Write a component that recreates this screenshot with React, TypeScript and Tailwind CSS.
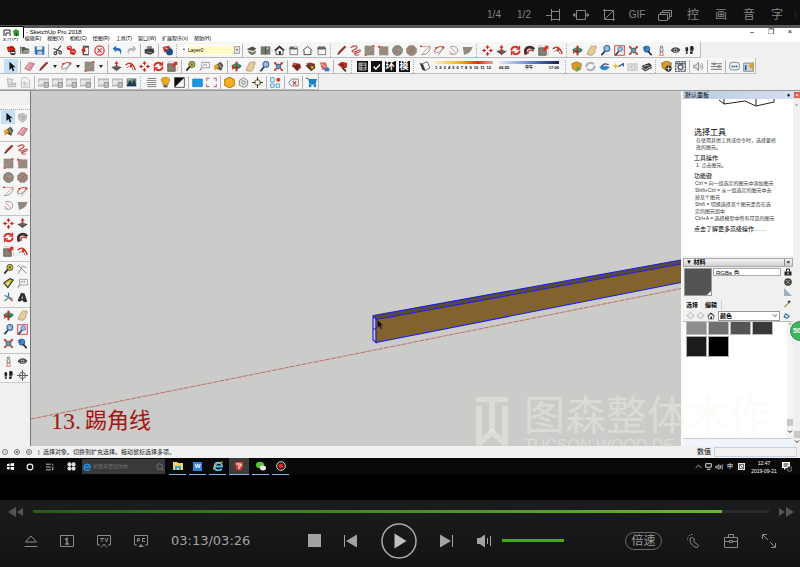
import type { ReactNode } from "react";
import clsx from "clsx";

const arrows = (
  <g stroke="#c8281e" strokeWidth="1.5" fill="#c8281e">
    <path d="M8 2v12M2 8h12" strokeDasharray="4 4" />
    <path d="M8 0l3 4H5zM8 16l3-4H5zM0 8l4-3v6zM16 8l-4-3v6z" stroke="none" />
  </g>
);

const glyphs: Record<string, ReactNode> = {
  newFile: <g><path d="M1 3l9-2 4 5-3 6-8-2z" fill="#d3271d" /><path d="M3 4l6-1 3 3" stroke="#7c1410" fill="none" /><circle cx="10" cy="11" r="4" fill="#333" /><path d="M7 11h6" stroke="#fff" strokeWidth="1.6" /></g>,
  open: <g><path d="M2 3h5l2 2h4v3H6l-3 6z" fill="#4f5b4a" /><path d="M5 8h10l-3 5H2z" fill="#8c9a82" /><path d="M1 2v11" stroke="#333" /></g>,
  save: <g><path d="M1 2h14v12H3l-2-2z" fill="#2f71b5" /><path d="M4 2h8v5H4z" fill="#eee" /><path d="M5 9h7v5H5z" fill="#bcd" /></g>,
  cut: <g stroke="#444" strokeWidth="1.6" fill="none"><path d="M13 1L6 10M2 5l11 4" /><circle cx="5" cy="12" r="2" /><circle cx="12" cy="11" r="2" /></g>,
  copy: <g fill="#d3271d"><path d="M1 2l6-1 2 3-2 4-5-1z" /><path d="M6 7l6-2 3 4-3 6-6-2z" /><path d="M3 3l4 1M8 9l5 1" stroke="#fff" /></g>,
  paste: <g><path d="M4 1h9v14H4z" fill="#555" /><path d="M6 4h6v9H6z" fill="#f5f5f5" /><path d="M2 6l5-2 1 5-4 3z" fill="#d3271d" /></g>,
  erase: <g fill="none" stroke="#e03028" strokeWidth="1.7"><circle cx="8" cy="8" r="6.8" /><path d="M5 5l6 6M11 5l-6 6" /></g>,
  undo: <path d="M1 5l5-4v3c7 0 10 4 6 11 1-5-1-7-6-7v3z" fill="#2470b8" />,
  redo: <path d="M15 5l-5-4v3C3 4 0 8 4 15c-1-5 1-7 6-7v3z" fill="#b9b9b9" />,
  print: <g><path d="M4 2l7-1 1 5H4z" fill="#888" /><path d="M1 6l13-1 1 6-6 3-8-2z" fill="#3b3b3b" /><path d="M4 10l7 1" stroke="#ccc" /></g>,
  model: <g><path d="M1 3l9-2 4 5-3 6-8-2z" fill="#cf3026" /><circle cx="11" cy="10" r="5" fill="#1f4e80" /><path d="M4 4l5 2" stroke="#fff" /></g>,
  iso: <g><path d="M1 6l8-4 6 3-5 4z" fill="#4a4d44" /><path d="M3 8l7 3 4-4v5l-5 3-5-3z" fill="#76796c" /><path d="M7 7l3 2" stroke="#ddd" /></g>,
  top: <g><path d="M1 2h14v12H1z" fill="#76796c" /><path d="M8 2v12" stroke="#3b3d37" /><path d="M10 4h2v2h-2z" fill="#ddd" /></g>,
  home: <g><path d="M1 8l7-6 7 6" fill="none" stroke="#222" strokeWidth="2" /><path d="M3 8v6h10V8L8 4z" fill="#f8f8f8" stroke="#222" /><path d="M7 9h3v5H7z" fill="#222" /></g>,
  right: <g><path d="M3 2h11v4H1z" fill="#66695e" /><path d="M3 6h11v8H3z" fill="#f6f6f6" stroke="#555" /><path d="M9 1h4v3H9z" fill="#ddd" /></g>,
  back: <g fill="#fafafa" stroke="#444" strokeWidth="1.4"><path d="M1 8l7-6 7 6" /><path d="M3 8v6h10V8" /></g>,
  left: <g><path d="M3 2h10l2 4H1z" fill="#66695e" /><path d="M3 6h11v8H3z" fill="#f6f6f6" stroke="#555" /></g>,
  pencil: <g><path d="M2 14l2-4L13 1l2 2-9 9z" fill="#a8291e" /><path d="M4 10l8-8" stroke="#40201c" /><path d="M2 14l1-3 2 2z" fill="#222" /></g>,
  freehand: <path d="M1 4c6-5 12-2 8 1S1 8 4 10s10-5 11-2-11 4-8 6 6 0 6 0" fill="none" stroke="#bc4545" strokeWidth="1.6" />,
  rect: <g><path d="M1 1h14v14H1z" fill="#8f8c80" /><path d="M3 14L14 2" stroke="#e58c84" /><path d="M1 13h3v3H1zM12 0h3v3h-3z" fill="#dc5b50" /></g>,
  rotRect: <g><path d="M2 2h13v13H2z" fill="#8f8c80" /><path d="M2 15V2l5 1 8 11" fill="none" stroke="#e07068" /><path d="M0 1h3v3H0z" fill="#dc4b40" /></g>,
  circle: <g><circle cx="8" cy="8" r="7.2" fill="#8f8c80" stroke="#6d6b60" /><path d="M7 9l5-4" stroke="#e5a09a" /><path d="M6 8h2v2H6z" fill="#d9483c" /></g>,
  polygon: <g><path d="M5 1h6l4 4v6l-4 4H5l-4-4V5z" fill="#8f8c80" stroke="#b4635a" /><path d="M5 12l7-8M5 5l3 3" stroke="#d9483c" /></g>,
  arc: <g fill="none"><path d="M2 14C10 14 14 10 15 2" stroke="#666" /><path d="M1 2h13L2 14" stroke="#dd766e" /><path d="M0 1h3v2H0z" fill="#d33" /></g>,
  arc2: <g fill="none"><path d="M1 11C1 3 8 1 14 3" stroke="#d65a50" strokeWidth="1.5" /><path d="M1 12l7-2 6-6-8 11" stroke="#777" /><path d="M2 3h3v2H2zM12 2h3v3h-3z" fill="#d33" /></g>,
  arc3: <g fill="none"><path d="M3 3c6-3 12 1 11 6s-8 6-12 3" stroke="#777" /><path d="M3 3l9 9M2 9l5 4" stroke="#e07068" /></g>,
  pie: <g><path d="M1 3h14C14 10 9 13 3 14z" fill="#8f8c80" /><path d="M15 2L3 14" stroke="#d66" /></g>,
  move: arrows,
  pushpull: <g><path d="M1 9l7-3 7 3-7 6z" fill="#6b6c60" /><path d="M1 9l7 3 7-3" stroke="#333" fill="none" /><path d="M8 0l3 4H9v6H7V4H5z" fill="#d42a20" /></g>,
  rotate: <g fill="none" stroke="#d42a20" strokeWidth="2.6"><path d="M2 8c0-6 8-7 11-3M14 8c0 6-8 7-11 3" /><path d="M14 1v5H9M2 15v-5h5" strokeWidth="1.6" /></g>,
  follow: <g fill="none"><path d="M3 14C-1 4 8 0 15 6" stroke="#3e302c" strokeWidth="4" /><path d="M6 13c-2-5 3-7 8-4" stroke="#b5281d" strokeWidth="2" /></g>,
  scale: <g><path d="M1 4h11v11H1z" fill="#858273" stroke="#4b4a40" /><path d="M9 1h6v6l-2-2-4 4-2-2 4-4z" fill="#e02b20" /><path d="M1 1h6M15 9v6" stroke="#e49a94" /></g>,
  offset: <g fill="none"><path d="M1 6c5-5 10-4 14 7" stroke="#d42a20" strokeWidth="2" /><path d="M3 10c3-4 7-3 9 4" stroke="#555" /><path d="M8 3l4 4-5 3z" fill="#d42a20" /></g>,
  tape: <g><circle cx="10" cy="5" r="4.5" fill="#c9ba2e" stroke="#333" /><path d="M7 8l-5 6" stroke="#222" strokeWidth="2.4" /><circle cx="10" cy="5" r="1.6" fill="#555" /></g>,
  label: <g fill="#fff" stroke="#777"><path d="M4 2h11v8H4z" /><path d="M6 7l2-3 1 3M11 4v3" /><path d="M4 10l-3 4" stroke="#222" /></g>,
  paint: <g><path d="M5 5l6-4 4 5-3 8-7-3z" fill="#5b5442" /><path d="M1 8c3-5 8-3 7 1l-5 5z" fill="#dda32c" /><path d="M9 4l3 6" stroke="#ddd" /></g>,
  orbit: <g fill="none"><path d="M1 7c2-5 12-5 14 0 0 6-13 6-14 0z" fill="#2f9d70" /><path d="M8 1v14" stroke="#b33" strokeWidth="3" /><path d="M1 7c4 4 9 4 14 0" stroke="#333" /><path d="M1 6l5 3-4 4z" fill="#d42a20" /></g>,
  pan: <path d="M2 14c-1-4 2-5 3-8 1-3 3-5 4-5l1 1 4-1 1 3-2 3c1 4-2 7-5 8z" fill="#e6ca9c" stroke="#a38b62" />,
  zoom: <g><circle cx="10" cy="5" r="4.2" fill="#9bbddf" stroke="#39639b" strokeWidth="1.5" /><path d="M7 9l-5 6" stroke="#26354a" strokeWidth="2.5" /></g>,
  zoomWin: <g><path d="M1 1h14v14H1z" fill="none" stroke="#d44" strokeWidth="1.5" /><circle cx="9" cy="6" r="3.6" fill="#9bbddf" stroke="#39639b" /><path d="M7 9l-5 6" stroke="#26354a" strokeWidth="2" /></g>,
  extents: <g><path d="M1 1l5 2-3 3zM15 1l-5 2 3 3zM1 15l5-2-3-3zM15 15l-5-2 3-3z" fill="#d42a20" /><path d="M2 2l12 12M14 2L2 14" stroke="#a22" /><circle cx="8" cy="8" r="3.5" fill="#6595b5" stroke="#345" /></g>,
  prev: <g><circle cx="7" cy="6" r="4.5" fill="#3d8ad2" stroke="#23507f" /><path d="M9 9l5 6" stroke="#222" strokeWidth="2.4" /><path d="M1 4l5-3v6z" fill="#1e66ac" /></g>,
  person: <g fill="none" stroke="#444"><circle cx="8" cy="3" r="1.6" /><path d="M6 5v5h4V5" /><path d="M7 10l-2 5h6l-2-5" stroke="#d44" /></g>,
  eye: <g><path d="M1 8c3-6 11-6 14-1-3 6-10 6-14 1z" fill="#4b4b4b" /><circle cx="8" cy="8" r="2.8" fill="#aaa" /><circle cx="8" cy="8" r="1.2" fill="#111" /></g>,
  walk: <g fill="#222"><path d="M2 4c3-3 5 0 4 3l-1 6H3zM9 2c4-2 6 1 5 4l-2 7H9z" /><path d="M3 10h3M9 9h4" stroke="#eee" /></g>,
  select: <path d="M5 1v12l3-3 2 5 2-1-2-5h4z" fill="#111" />,
  lasso: <g fill="#c8c8c8" stroke="#999"><path d="M2 4l6-2 6 3-1 6-5 4-5-4z" /><path d="M6 6l5 1-2 4z" /></g>,
  eraser: <g><path d="M1 11l7-9 7 2-6 10z" fill="#e394a3" stroke="#a45566" /><path d="M4 11l6-8" stroke="#fadce1" /></g>,
  gemRed: <g><path d="M1 7l4-4 8 1 2 5-6 6z" fill="#a22c22" /><path d="M4 4l9 3-5 6z" fill="#443430" /><path d="M3 3l4 3" stroke="#e44" strokeWidth="2" /></g>,
  gemOrange: <g><path d="M1 7l5-5 8 2 1 6-6 5z" fill="#56392c" /><path d="M1 4l7-2 2 4z" fill="#d42a20" /><path d="M8 7l5 1-3 5z" fill="#f0a81c" /></g>,
  gemBlue: <g><path d="M1 2h9l3 9-8 2z" fill="#dc6258" /><path d="M8 10h7v5H8z" fill="#2b7bc8" /><path d="M3 4l7 5" stroke="#fff" /></g>,
  ruby: <g><path d="M1 5l6-4 8 2-1 7-6 1z" fill="#c32b22" /><path d="M8 10l5 5" stroke="#333" strokeWidth="2.5" /><path d="M5 4l5 3" stroke="#692020" strokeWidth="2" /></g>,
  list: <g><path d="M0 0h16v16H0z" fill="#111" /><path d="M3 3h10v10H3zM3 6h10M3 10h10M6 3v10" stroke="#fff" fill="none" /></g>,
  check: <g><path d="M0 0h16v16H0z" fill="#111" /><path d="M4 8l3 4 6-7" stroke="#fff" strokeWidth="2" fill="none" /></g>,
  shadow: <g><path d="M5 4l7-3 4 9-7 4z" fill="#f6f6f6" stroke="#333" /><path d="M1 3l4 1 4 10-4-1z" fill="#333" /></g>,
  warehouse: <g><path d="M1 4l7-3 7 3-1 8-6 3-6-4z" fill="#dc9a2c" stroke="#9b6b1a" /><path d="M8 7l6 4-6 4z" fill="#57a852" /></g>,
  sync: <g fill="none" stroke="#b1b1b1" strokeWidth="3"><path d="M2 9c0-7 8-8 11-4M14 7c0 7-8 8-11 4" /></g>,
  dish: <g><path d="M1 9c4 6 11 4 14 0-4-2-9-2-14 0z" fill="#2b80c6" stroke="#2b80c6" /><path d="M3 8l5-4 6 1" stroke="#235" fill="none" strokeWidth="1.5" /></g>,
  star: <g><path d="M4 2l1 4 4 1-4 2-1 4-1-4-3-2 3-1z" fill="#e9bc18" /><path d="M8 8l7-4v4" stroke="#247" strokeWidth="1.6" fill="none" /></g>,
  camera: <g fill="#dedede" stroke="#bcbcbc"><path d="M1 4h14v10H1z" /><circle cx="9" cy="9" r="3" /></g>,
  layers: <g><path d="M1 7l11-4 4 4-10 5z" fill="#333" /><path d="M1 10l5 4 10-5" stroke="#555" strokeWidth="2" fill="none" /><path d="M4 7l8 0" stroke="#eee" /></g>,
  boxPlus: <g><path d="M1 3l7-3 7 3-1 8-6 3-6-4z" fill="#dc9a2c" stroke="#7a5514" /><circle cx="11" cy="11" r="4.5" fill="#333" /><path d="M8 11h6M11 8v6" stroke="#fff" /></g>,
  gears: <g fill="none" stroke="#53606c" strokeWidth="2"><path d="M1 1h14v14H1z" strokeDasharray="3 1" /><circle cx="8" cy="9" r="3.5" /><path d="M2 4h12" /></g>,
  sound: <g fill="none" stroke="#666"><path d="M1 6h3l4-4v12l-4-4H1z" fill="#ddd" /><path d="M10 5c2 2 2 4 0 6M12 3c3 3 3 7 0 10" /></g>,
  sliders: <g stroke="#666" strokeWidth="1.3"><path d="M0 4h16M0 8h16M0 12h16" /><path d="M3 3h3v2H3zM10 7h3v2h-3z" fill="#fff" /></g>,
  chat: <g><rect x="1" y="2" width="14" height="11" rx="3" fill="#e8eef2" stroke="#567" /><path d="M4 8h2M7 8h2M10 8h2" stroke="#345" strokeWidth="2" /></g>,
  info: <g><path d="M1 3h14v12H1z" fill="#ccd7df" stroke="#567" /><path d="M8 7l7-6v13z" fill="#e3a02a" /><path d="M4 6v7" stroke="#246" strokeWidth="2" /></g>,
  grey1: <g fill="#e4e4e4" stroke="#9a9a9a"><path d="M2 2l8 2-3 5h7v5H3V9z" /><path d="M4 11h8" /></g>,
  grey2: <g fill="#f4f4f4" stroke="#aaa"><path d="M3 1h7l4 4v10H2V5z" /><path d="M4 9h8M5 12h6M6 6v6" /></g>,
  terrain: <g stroke="#a2a2a2" strokeWidth="1.3"><path d="M0 3h16v10H0z" fill="#d8d8d8" /><path d="M1 10l4-4 4 4 3-3 3 4" fill="none" stroke="#f6f6f6" strokeWidth="2" /><path d="M9 8h6v7H9z" fill="#c2c2c2" stroke="#8a8a8a" /></g>,
  terrainBlue: <g><path d="M1 2h14v12H1z" fill="#6d8491" /><path d="M1 13l5-9 3 6 3-7 3 10z" fill="#203a4a" /><path d="M2 4h6" stroke="#a9c46a" strokeWidth="2" /></g>,
  rows: <path d="M2 2h13M1 5h14M1 8h14M1 11h14M2 14h13" stroke="#555" />,
  bulb: <g><path d="M4 9C-1 3 4 0 8 0s9 3 4 9v2H4z" fill="#e8ad24" stroke="#a87d16" /><path d="M5 12h6v3H5z" fill="#555" /></g>,
  contrast: <g><path d="M1 1h14v14H1z" fill="#fff" stroke="#111" /><path d="M1 1h14L1 15z" fill="#111" /></g>,
  blueRect: <path d="M1 3h14v11H1z" fill="#1b96e0" stroke="#1475b2" />,
  corners: <path d="M1 6V2h4M11 2h4v4M15 10v4h-4M5 14H1v-4" fill="none" stroke="#b77" strokeWidth="1.6" />,
  hexOrange: <path d="M8 0l7 4v8l-7 4-7-4V4z" fill="#f4ae1e" stroke="#bb7f12" strokeWidth="1.5" />,
  hexGrey: <g fill="#e5e5e5" stroke="#888" strokeWidth="1.4"><path d="M8 1l6 4v7l-6 3-6-3V5z" /><circle cx="8" cy="8" r="2.5" /></g>,
  target: <g fill="none" stroke="#333" strokeWidth="1.5"><circle cx="8" cy="8" r="4" stroke="#93703c" /><path d="M8 0v5M8 11v5M0 8h5M11 8h5" /></g>,
  blocks: <g fill="none" stroke="#4a9fd4" strokeWidth="1.4"><path d="M1 1h5v6H1zM1 10h5v5H1zM9 10h5v5H9z" /><circle cx="12" cy="4" r="3" fill="#e33a28" stroke="none" /></g>,
  tagX: <g fill="#f7f7f7" stroke="#555"><path d="M5 3h10v10H5L1 8z" /><path d="M7 6l5 5M12 6l-5 5" stroke="#c33" strokeWidth="1.5" /></g>,
  cart: <g fill="#1d83cc"><path d="M0 1h3l1 2h12l-2 7H5L3 3H0z" /><circle cx="6" cy="13" r="2" /><circle cx="13" cy="13" r="2" /><path d="M4 11h11" stroke="#1d83cc" /></g>,
  dimension: <g fill="none" stroke="#666"><path d="M2 2l12 12M2 14L8 3l6 2" /><path d="M1 4l3-3" stroke="#393" /></g>,
  protractor: <g><path d="M1 7l9-6 5 2-8 11z" fill="#c9ba2e" stroke="#333" strokeWidth="1.5" /><path d="M5 8l5-3-3 6z" fill="#eee" /></g>,
  axes: <g strokeWidth="1.8"><path d="M8 8V1" stroke="#36c" /><path d="M8 8l6 5" stroke="#d33" /><path d="M8 8l-6 5" stroke="#3a5" /><path d="M2 5l12 5" stroke="#68a" /></g>,
  text3d: <g fill="#2f2f2f"><path d="M6 1l5 1 4 12-5 1-2-3-5 2-2-2z" /><path d="M8 5l1 4-3 1z" fill="#bbb" /></g>,
  crosshair: <g fill="none" stroke="#555" strokeWidth="1.4"><circle cx="8" cy="8" r="4.5" /><path d="M8 0v16M0 8h16" /></g>,
  picker: <g><path d="M2 14l8-9 2 2-8 8z" fill="#8ba05e" /><path d="M9 3l4-2 2 2-3 4z" fill="#222" /></g>,
  textureBall: <g><circle cx="8" cy="8" r="7.5" fill="#3a3f36" /><path d="M3 5l4 2 5-3M5 11l4-2 3 3" stroke="#c7c9bd" strokeWidth="1.6" fill="none" /></g>,
  lock: <g fill="#222"><path d="M1 7h14v8H1z" /><path d="M5 7V2h6v5" fill="none" stroke="#222" strokeWidth="2" /><path d="M8 9v4" stroke="#fff" strokeWidth="2" /></g>,
  corner: <path d="M0 0l16 16H0z" fill="#9fb0bf" />,
  details: <g><path d="M5 2l9 6-6 6-7-4z" fill="#2c668f" /><path d="M4 5l7 3-5 4z" fill="#fff" /></g>,
};

function Glyph({ name, className = "size-[11px]" }: { name: string; className?: string }) {
  return (
    <svg viewBox="0 0 16 16" className={clsx("shrink-0", className)} fill="none" aria-hidden="true">
      {glyphs[name]}
    </svg>
  );
}

// "|" is a divider, ":" a drag handle, "v" a small drop-down arrow
function Tools({ items }: { items: string }) {
  return (
    <>
      {items.split(" ").map((name, i) => {
        if (name === "|") return <span key={i} className="mr-px ml-0.5 h-[13px] w-px shrink-0 bg-[#b4b4b4]" />;
        if (name === ":") return <span key={i} className="mx-0.5 h-[13px] w-0.5 shrink-0 border-l border-dotted border-[#aaa]" />;
        if (name === "v")
          return (
            <button key={i} aria-label="more" className="flex w-[9px] shrink-0 items-center justify-center">
              <span className="border-x-2 border-t-3 border-x-transparent border-t-[#222]" />
            </button>
          );
        return (
          <button
            key={i}
            aria-label={name}
            className={clsx("flex h-3.5 w-3.5 shrink-0 items-center justify-center", name === "select" && "bg-[#c5dff5]")}
          >
            {name === "ring" || name === "mold" ? (
              <span className="size-[11px] bg-[#111] text-center text-[9px] leading-[11px] font-bold text-white">{name === "ring" ? "环" : "模"}</span>
            ) : (
              <Glyph name={name} />
            )}
          </button>
        );
      })}
    </>
  );
}

const menus = ["文件(F)", "编辑(E)", "视图(V)", "相机(C)", "绘图(R)", "工具(T)", "窗口(W)", "扩展程序(x)", "帮助(H)"];

const toolbox = [
  "select lasso paint eraser",
  "pencil freehand rect rotRect circle polygon arc arc2 arc3 pie",
  "move pushpull rotate follow scale offset",
  "tape dimension protractor label axes text3d",
  "orbit pan zoom zoomWin extents prev",
  "person eye walk crosshair",
];

const rowClass = "flex h-4 w-max items-center border-r border-b border-[#bcbcbc] bg-[#f6f6f6] pt-px";
const rangeClass =
  "block appearance-none outline-none [&::-webkit-slider-thumb]:size-0 [&::-webkit-slider-thumb]:appearance-none";

function TopBar() {
  const slot = "flex w-7 items-center justify-center";
  const line = { viewBox: "0 0 16 14", className: "h-3.5 w-4", fill: "none", stroke: "#858585" };
  return (
    <header className="flex h-7 items-center justify-end border-b-3 border-[#555] bg-[#0f0f0f] pt-1 pr-1 text-[12px] text-[#858585]">
      <button className="w-[30px] text-[10px]">1/4</button>
      <button className="w-[30px] text-[10px]">1/2</button>
      <button className={slot} aria-label="置顶">
        <svg {...line}><path d="M1 7.500h5M6.500 1v12M6.500 3.500h8v8h-8M14.500 1v12" /></svg>
      </button>
      <button className={slot} aria-label="适应">
        <svg {...line}><path d="M3.500 2.500h9v9h-9z" /><path d="M0 7l2-1.500v3zM16 7l-2-1.500v3z" fill="#858585" /></svg>
      </button>
      <button className={slot} aria-label="裁剪">
        <svg {...line}><path d="M3.500 1v10.500H14M2 2.500h10.500V13M4 11l8-8" /></svg>
      </button>
      <button className="flex w-7 items-center justify-center text-[10px]">GIF</button>
      <button className={slot} aria-label="窗口">
        <svg {...line}><path d="M1.500 6.500h9v6h-9zM3.500 6V4.500h9v6H11M5.500 4V2.500h9v6H13" /></svg>
      </button>
      {["控", "画", "音", "字"].map((t) => (
        <button key={t} className={slot}>{t}</button>
      ))}
      <span className="ml-1 h-2 w-px bg-[#222]" />
    </header>
  );
}

function Toolbars() {
  return (
    <div className="relative bg-[#f0f0f0] text-black">
      <div className="flex h-[7px] items-center justify-between bg-white pl-[26px] text-[6px] leading-[6px]">
        <span>- SketchUp Pro 2018</span>
        <span className="flex gap-3.5 pr-2 text-[7px]">
          <button aria-label="最小化">–</button>
          <button aria-label="还原">❐</button>
          <button aria-label="关闭">×</button>
        </span>
      </div>
      <nav className="flex h-[7px] items-center gap-1.5 bg-white pl-0.5 text-[5px] leading-[7px]">
        {menus.map((m) => (
          <button key={m} className="whitespace-nowrap">{m}</button>
        ))}
      </nav>
      <div className="absolute -top-0.5 left-0 flex h-3 w-6 items-center justify-around border-t border-r border-black bg-white px-0.5">
        <svg viewBox="0 0 8 8" className="size-2" fill="none" stroke="#222"><path d="M1 7V1h6v6M3 4h3M3 7V4" /></svg>
        <svg viewBox="0 0 8 8" className="size-2"><path d="M1 2l3-2 3 2v5H2z" fill="#2e9e2e" /><path d="M3 4h2v4" fill="#164f16" /></svg>
      </div>

      <div className={rowClass}>
        <span className="w-1" />
        <Tools items="newFile open save | cut copy paste erase | undo redo | print | model :" />
        <div className="flex h-2.5 w-[60px] items-center bg-white">
          <span className="w-2 text-center text-[5px]">•</span>
          <select aria-label="图层" className="h-2 flex-1 appearance-none bg-[#fffbc4] text-[5px] leading-[8px]">
            <option>Layer0</option>
          </select>
          <span className="flex h-2 w-1.5 items-center justify-center border border-[#aaa] bg-[#e2e2e2]">
            <span className="border-x-1 border-t-2 border-x-transparent border-t-[#555]" />
          </span>
        </div>
        <Tools items="| iso top home right back left : pencil freehand rect rotRect circle polygon arc arc2 arc3 pie : move pushpull rotate follow scale offset : orbit pan zoom zoomWin extents prev person eye walk" />
        <span className="w-1" />
      </div>
      <div className={rowClass}>
        <span className="w-1" />
        <Tools items="select | eraser pencil v arc2 v rect v | pushpull offset move rotate scale | tape label paint | orbit pan zoom extents | gemRed gemOrange gemBlue | ruby : list check ring mold : shadow" />
        <div className="mx-0.5 w-[60px]">
          <input type="range" aria-label="日期" className={clsx(rangeClass, "h-[3px] w-full bg-[linear-gradient(90deg,#fff4d0,#f4ad22_45%,#e52a18_75%,#e9a49d)]")} />
          <p className="flex justify-between px-0.5 text-[4px] leading-[7px] font-bold">
            {Array.from({ length: 12 }, (_, i) => <span key={i}>{i + 1}</span>)}
          </p>
        </div>
        <div className="mx-1 w-[60px]">
          <input type="range" aria-label="时间" className={clsx(rangeClass, "h-[3px] w-full bg-[linear-gradient(90deg,#e4ebf8,#5a7fd8_55%,#16234c)]")} />
          <p className="flex justify-between text-[4px] leading-[7px] font-bold">
            <span>06:55</span><span>中午</span><span>17:00</span>
          </p>
        </div>
        <Tools items=": warehouse sync dish star camera layers : boxPlus gears | sound | sliders | chat info" />
      </div>
      <div className={rowClass}>
        <span className="w-1" />
        <Tools items="grey1 grey2 | terrain terrain terrain terrain | terrain terrain terrainBlue : rows bulb contrast | blueRect corners | hexOrange hexGrey target | blocks | tagX | cart" />
      </div>
    </div>
  );
}

function Toolbox() {
  return (
    <aside className="w-[31px] shrink-0 border-r border-[#777] bg-[#f0f0f0] pt-3.5">
      <div className="border-b border-[#ccc] bg-[#f6f6f6] pt-1">
        <div className="flex flex-col gap-[3px] border-t border-dotted border-[#aaa]">
          {toolbox.map((group, i) => (
            <div key={i} className={clsx("flex flex-wrap pl-px", i > 0 && "border-t border-[#c4c4c4]")}>
              <Tools items={group} />
            </div>
          ))}
        </div>
      </div>
    </aside>
  );
}

function Scene() {
  return (
    <main className="relative min-w-0 flex-1 overflow-hidden bg-[#cbcbc9]">
      <svg viewBox="0 0 650 355" preserveAspectRatio="xMaxYMin slice" className="absolute inset-0 h-full w-full">
        <path d="M0 328L650 197.500" stroke="#b5473f" strokeWidth=".7" strokeDasharray="5 1" />
        <path d="M342.500 224.500L650 169v4L344.500 228.500z" fill="#574a3c" />
        <path d="M344.500 228L650 172.500v19L344.500 251.500z" fill="#82632d" />
        <path d="M342.500 224.500L650 169M345 228.500L650 173M345 251.500L650 191.500M345 228v23.500l-3-2.500V225l3 3M342 238h3" fill="none" stroke="#1c1ce0" strokeWidth="1.1" />
        <path d="M343.500 229v8M343.500 240v8" stroke="#c9c9ff" />
        <path d="M346.500 229v8l2-2 1.500 3 1-.5-1.500-3h2.500z" fill="#111" />
      </svg>
      <p className="absolute bottom-2.5 left-5 flex items-center gap-1 text-[22px] leading-[30px] text-[#a31510]">
        <span className="font-['Liberation_Serif',serif] text-[24px]">13.</span>踢角线
      </p>
    </main>
  );
}

function Tray() {
  return (
    <aside className="flex w-[119px] shrink-0 flex-col border-l-2 border-[#f8f8f8] bg-[#f0f0f0] text-[5px] leading-[7px] text-[#333]">
      <h2 className="flex h-2 items-center bg-linear-to-r from-[#b9cbe0] to-[#d5e1ee] pl-0.5 text-[6px] text-black">
        默认面板
        <span className="ml-auto pr-1">♦</span>
        <button aria-label="关闭面板" className="h-1.5 w-1.5 bg-[#d9604f] text-[6px] leading-[6px] text-white">×</button>
      </h2>
      <div className="flex flex-1">
        <div className="flex min-w-0 flex-1 flex-col">
          <section className="h-[157px] bg-white pr-1 pl-[11px]">
            <svg viewBox="0 0 60 9" className="ml-6 h-[9px] w-[60px]" fill="none" stroke="#222">
              <path d="M1 1l5 4 21-3 11 5 18-4V0M6 0v5M38 0v7" />
            </svg>
            <h3 className="mt-[21px] font-['Liberation_Serif','Noto_Sans_CJK_SC',serif] text-[8px] leading-[8px] text-black">选择工具</h3>
            <p className="pl-0.5 whitespace-nowrap">在使用其他工具或命令时，选择要修<br />改的图元。</p>
            <h4 className="mt-1 text-[6px] text-black">工具操作</h4>
            <p className="pl-0.5">1. 点击图元。</p>
            <h4 className="mt-1 text-[6px] text-black">功能键</h4>
            <p className="pl-px whitespace-nowrap">
              Ctrl = 向一组选定的图元中添加图元<br />
              Shift+Ctrl = 从一组选定的图元中去<br />掉某个图元<br />
              Shift = 切换选择某个图元是否在选<br />定的图元组中<br />
              Ctrl+A = 选择模型中所有可见的图元
            </p>
            <a href="#more" className="mt-1 block text-[6px] text-black">点击了解更多高级操作……</a>
          </section>
          <h3 className="mt-0.5 flex h-[9px] items-center border border-[#aaa] bg-linear-to-b from-[#f4f4f4] to-[#cfcfcf] px-0.5 text-[6px] font-bold text-black">
            ▼ 材料
            <button aria-label="关闭材料" className="ml-auto border-l border-[#888] pl-px">×</button>
          </h3>
          <div className="flex h-[30px] pt-px pl-px">
            <div className="relative h-7 w-7 border border-[#999] bg-[#545454]">
              <span className="absolute right-0 bottom-0 border-2 border-transparent border-r-white border-b-white" />
            </div>
            <input aria-label="材质名称" defaultValue="RGBs 色" className="ml-px h-2 min-w-0 flex-1 border border-[#aaa] bg-white px-0.5 text-[6px] leading-[6px] text-black" />
            <div className="ml-px flex w-[11px] flex-col items-center gap-0.5">
              <Glyph name="lock" className="size-2" />
              <Glyph name="textureBall" className="size-2" />
              <Glyph name="corner" className="size-2" />
            </div>
          </div>
          <div className="flex h-[13px] items-end pl-px text-[6px] font-bold text-black">
            <button className="h-2.5 bg-white px-0.5">选择</button>
            <button className="ml-px h-2.5 border-r border-[#ccc] px-1">编辑</button>
            <Glyph name="picker" className="mr-0.5 mb-0.5 ml-auto size-2" />
          </div>
          <div className="flex h-3 items-center gap-[3px] border-b border-[#bbb] pr-0.5 pl-1 text-black">
            <button aria-label="后退" className="text-[7px]">◇</button>
            <button aria-label="前进" className="text-[7px]">◇</button>
            <button aria-label="模型中" className="flex"><Glyph name="home" className="size-2" /></button>
            <div className="flex h-2.5 min-w-0 flex-1 items-center border border-[#999] bg-white pr-px">
              <select aria-label="材质集" className="h-2 min-w-0 flex-1 appearance-none px-px text-[6px] leading-[8px] font-bold">
                <option>颜色</option>
              </select>
              <svg viewBox="0 0 6 4" className="h-1 w-1.5" fill="none" stroke="#555"><path d="M1 .5l2 2 2-2" /></svg>
            </div>
            <Glyph name="details" className="size-2" />
          </div>
          <div className="flex flex-1 border-b border-[#ccc]">
            <div className="grid flex-1 grid-cols-4 content-start gap-x-px gap-y-px bg-white pr-3.5 pl-[3px]">
              <span className="h-[13px] border border-t-0 border-[#bbb] bg-[#8d8d8d]" />
              <span className="h-[13px] border border-t-0 border-[#bbb] bg-[#707070]" />
              <span className="h-[13px] border border-t-0 border-[#bbb] bg-[#545454]" />
              <span className="h-[13px] border border-t-0 border-[#bbb] bg-[#383838]" />
              <span className="h-[21px] border border-[#aaa] bg-[#1c1c1c]" />
              <span className="h-[21px] border border-[#aaa] bg-black" />
            </div>
            <div className="flex w-1.5 flex-col items-center bg-[#f4f4f4]">
              <span>^</span>
              <span className="mt-auto h-[7px] w-1.5 bg-[#c8c8c8]" />
              <svg viewBox="0 0 6 4" className="my-1 h-1 w-1.5" fill="none" stroke="#333"><path d="M1 .5l2 2 2-2" /></svg>
            </div>
          </div>
          <div className="h-[7px] bg-[#f0f4fd]" />
        </div>
        <div className="flex w-[7px] flex-col items-center bg-[#f0f0f0]">
          <span className="pt-1">^</span>
          <span className="mt-auto h-[7px] w-1.5 bg-[#c8c8c8]" />
          <svg viewBox="0 0 6 4" className="my-0.5 h-1 w-1.5" fill="none" stroke="#333"><path d="M1 .5l2 2 2-2" /></svg>
        </div>
      </div>
    </aside>
  );
}

function Watermark() {
  return (
    <div className="pointer-events-none absolute right-[30px] bottom-0 flex h-[52px] gap-4 overflow-hidden text-[#f6f6ec]/40">
      <svg viewBox="0 0 32 49" className="mt-[3px] h-[49px] w-8 fill-current">
        <path d="M0 0h32v5H19v32l-3-3-3 3V5H0z" />
        <path d="M0 9h6v31l10-9 10 9V9h6v40h-5L16 39 5 49H0z" />
      </svg>
      <div>
        <p className="text-[41px] leading-[44px] whitespace-nowrap">图森整体木作</p>
        <p className="text-[16px] leading-[16px] whitespace-nowrap">TUCSON WOOD DE</p>
      </div>
    </div>
  );
}

function StatusBar() {
  return (
    <footer className="flex h-3 items-center bg-[#f0f0f0] pr-[3px] pl-0.5 text-[6px] leading-[10px] text-[#222]">
      <span className="flex w-[41px] items-center gap-1.5">
        {["↑", "●", "♙"].map((s) => (
          <span key={s} className="flex size-1.5 items-center justify-center rounded-full border border-[#777] text-[4px]">{s}</span>
        ))}
        <span className="leading-[6px]">|</span>
      </span>
      选择对象。切换到扩充选择。拖动鼠标选择多项。
      <label htmlFor="measure" className="ml-auto pr-[3px] text-[7px] text-black">数值</label>
      <input id="measure" className="h-2.5 w-[83px] border border-[#c5d3e4] bg-[#f0f0f0]" />
    </footer>
  );
}

function Taskbar() {
  const app = "flex h-full w-[17px] items-center justify-center border-b border-[#76b9ed]";
  const light = { viewBox: "0 0 10 10", fill: "none", stroke: "#eee" };
  return (
    <div className="flex h-[17px] items-center bg-[#080808] text-[5px] text-white">
      <button aria-label="开始" className="flex w-5 justify-center">
        <svg viewBox="0 0 8 8" className="size-[7px] fill-white"><path d="M0 1l3-.5v3H0zM4 .5L8 0v3.500H4zM0 4.500h3v3L0 7zM4 4.500h4V8l-4-.5z" /></svg>
      </button>
      <button aria-label="Cortana" className="flex w-5 justify-center">
        <svg {...light} className="size-2"><circle cx="5" cy="5" r="3.600" strokeWidth="1.500" /></svg>
      </button>
      <button aria-label="任务视图" className="flex w-5 justify-center">
        <svg {...light} className="size-2"><path d="M0 1.500h6M0 5h6M0 8.500h6M8.500 1v2M8.500 4.500V9" /></svg>
      </button>
      <button aria-label="应用" className="flex w-[22px] justify-center">
        <svg viewBox="0 0 10 10" className="size-[9px] fill-[#ddd]"><circle cx="2.700" cy="2.700" r="2.300" /><circle cx="7.300" cy="2.700" r="2.300" /><circle cx="2.700" cy="7.300" r="2.300" /><circle cx="7.300" cy="7.300" r="2.300" /></svg>
      </button>
      <div className="flex h-[15px] w-[83px] items-center bg-[#393939] px-px">
        <svg viewBox="0 0 10 10" className="size-2" fill="none" stroke="#1e8be8" strokeWidth="2"><path d="M2 5.500h7C9 1 2 0 1.500 5S6 10 9 8" /></svg>
        <input aria-label="搜索" placeholder="听歌竟是因为你" className="w-[60px] flex-1 pl-0.5 text-[5px] placeholder:text-[#777]" />
        <svg {...light} className="size-2" stroke="#888"><circle cx="4.500" cy="4.500" r="3.500" /><path d="M7 7l3 3" /></svg>
      </div>
      <div className="flex h-full gap-[3px] pl-1">
        <button aria-label="文件夹" className={app}>
          <svg viewBox="0 0 10 10" className="size-2.5"><path d="M0 1h4l1 1h5v7H0z" fill="#f5d36b" /><path d="M2 5h6v4H6V7H4v2H2z" fill="#3aa0dc" /></svg>
        </button>
        <button aria-label="WPS" className={app}>
          <span className="size-[9px] bg-[#2d82e4] text-center text-[6px] leading-[9px] font-bold">W</span>
        </button>
        <button aria-label="浏览器" className={app}>
          <svg viewBox="0 0 10 10" className="size-2.5" fill="none"><path d="M2 5.500h7C9 1 2 0 1.500 5S6 10 9 8" stroke="#58bff0" strokeWidth="1.800" /><path d="M0 9C1 5 5 1 10 1" stroke="#e8c93c" /></svg>
        </button>
        <button aria-label="SketchUp" className="flex h-full w-5 items-center justify-center border-b border-[#76b9ed] bg-[#3d3d3d]">
          <svg viewBox="0 0 10 10" className="size-2.5"><path d="M1 1l8 0v5L6 10 2 8z" fill="#de3a30" /><path d="M2 3h5v2H4M4 7h2" stroke="#fff" fill="none" /></svg>
        </button>
        <button aria-label="微信" className={app}>
          <svg viewBox="0 0 10 10" className="size-2.5"><ellipse cx="4" cy="4" rx="4" ry="3.300" fill="#5fc23b" /><ellipse cx="7" cy="7" rx="3" ry="2.500" fill="#eee" /></svg>
        </button>
        <button aria-label="录制" className={app}>
          <svg viewBox="0 0 10 10" className="size-2.5"><circle cx="5" cy="5" r="4.300" fill="#111" stroke="#ddd" /><circle cx="5" cy="5" r="2.400" fill="#e5261e" /></svg>
        </button>
      </div>
      <div className="ml-auto flex items-center gap-[3px] pr-2">
        <svg {...light} className="size-[7px]"><path d="M1 7l4-4 4 4" /></svg>
        <svg {...light} className="size-[7px]"><path d="M1 1h8v5H1zM3 9h5" strokeWidth="1.300" /></svg>
        <svg {...light} className="size-2"><path d="M1 4h2l2-2v6L3 6H1zM7 3v4M9 2v6" /></svg>
        <span className="px-px text-[6px]">中</span>
        <svg viewBox="0 0 10 10" className="mx-px size-[7px]"><path d="M0 0h10v10H0z" fill="#eee" /><path d="M2 2h6v6H2zM3 3l4 4" stroke="#222" fill="none" /></svg>
        <time className="w-[30px] text-center leading-[8px]">12:47<br />2019-09-21</time>
        <svg viewBox="0 0 10 10" className="size-2.5"><path d="M0 0h8v6H4L2 8V6H0z" fill="#fff" /><path d="M1.500 2h5M1.500 4h4" stroke="#222" /><circle cx="7.500" cy="7" r="2.500" fill="#222" stroke="#aaa" strokeWidth=".6" /></svg>
      </div>
    </div>
  );
}

function Player() {
  const icon = { viewBox: "0 0 14 14", className: "size-3.5", fill: "none", stroke: "#8a8a8a" };
  return (
    <section className="h-[67px] bg-linear-to-b from-[#1b1c1e] to-[#131314] text-[#a3a3a3]">
      <div className="flex h-[23px] items-center px-1.5">
        <button aria-label="快退" className="flex w-[27px] pl-0.5">
          <svg viewBox="0 0 16 10" className="h-2.5 w-4 fill-[#555]"><path d="M8 0v10L0 5zM15 1v8L9 5z" /></svg>
        </button>
        <input
          type="range"
          aria-label="进度"
          max={206}
          defaultValue={193}
          className={clsx(rangeClass, "h-[3px] min-w-0 flex-1 bg-[linear-gradient(90deg,#275c12,#68b92c_93.6%,#2b2b2d_93.6%)]")}
        />
        <button aria-label="快进" className="flex w-[25px] justify-end">
          <svg viewBox="0 0 16 10" className="h-2.5 w-4 fill-[#555]"><path d="M8 0v10l8-5zM1 1v8l6-4z" /></svg>
        </button>
      </div>
      <div className="flex h-[35px] items-center justify-between px-6">
        <div className="flex items-center">
          <button aria-label="打开" className="flex w-9"><svg {...icon}><path d="M7 2l5.500 6h-11zM.5 12.500h13" /></svg></button>
          <button aria-label="一倍" className="flex w-[37px]">
            <svg {...icon}><path d="M.5 1.500h13v11H.5z" /><path d="M5 5.500l2-1V10M5 10h4" strokeWidth="1.600" /></svg>
          </button>
          <button aria-label="电视" className="flex w-[37px]">
            <svg {...icon}><path d="M3 11H.5V1.500h13V11H11M4 13.500L7 10l3 3.500M3 4.500h4M5 4.500V8M8 4l1.500 4L11 4" /></svg>
          </button>
          <button aria-label="电脑" className="flex w-9">
            <svg {...icon}><path d="M3 11H.5V1.500h13V11H11M3.500 8V4.500h2v2h-2M11 4.500H8.500v3H11" /><path d="M4 13l3-3 3 3z" fill="#8a8a8a" stroke="none" /></svg>
          </button>
          <time className="w-20 pl-px font-['DejaVu_Sans',sans-serif] text-[13px]">03:13/03:26</time>
        </div>
        <div className="flex items-center gap-[23px]">
          <button aria-label="停止" className="size-[13px] bg-[#a3a3a3]" />
          <button aria-label="上一个" className="flex">
            <svg viewBox="0 0 14 14" className="size-3.5 fill-[#a3a3a3]"><path d="M0 1h1v12H0zM13 .5v13L2 7z" /></svg>
          </button>
          <button aria-label="播放" className="flex">
            <svg viewBox="0 0 36 36" className="size-9"><circle cx="18" cy="18" r="17" fill="none" stroke="#aaa" strokeWidth="1.500" /><path d="M13.500 10.500v15l12-7.500z" fill="#c0c0c0" /></svg>
          </button>
          <button aria-label="下一个" className="flex">
            <svg viewBox="0 0 14 14" className="size-3.5 fill-[#a3a3a3]"><path d="M12 1h1v12h-1zM0 .5v13L11 7z" /></svg>
          </button>
          <div className="flex items-center gap-[11px] pr-1">
            <button aria-label="静音" className="flex">
              <svg viewBox="0 0 14 14" className="size-3.5"><path d="M0 4h3l5-3.500v13L3 10H0zM10 4h1v6h-1zM13 2h1v10h-1z" fill="#a3a3a3" /></svg>
            </button>
            <input type="range" aria-label="音量" defaultValue={100} className={clsx(rangeClass, "h-[3px] w-[62px] bg-[#45ad05]")} />
          </div>
        </div>
        <div className="flex items-center gap-6">
          <button className="h-[18px] w-[37px] rounded-full border border-[#6a6a6a] text-[12px] leading-[16px] text-[#999]">倍速</button>
          <button aria-label="步进" className="flex">
            <svg {...icon}><path d="M4.500 4c2-1.500 4.500.5 3.500 3-.5 1.500 1 2 3 3 2.500 1.500 1 4.500-2 3-4-2-6-6-4.500-9zM1 5.500h1M1.500 3.500h1M3 1.500h1M5 .5h1.500" /></svg>
          </button>
          <button aria-label="工具箱" className="flex">
            <svg {...icon}><path d="M.5 3.500h13v10H.5zM4.500 3V.5h5V3M.5 7.500h5M8.500 7.500h5M5.500 6.500h3v2h-3z" /></svg>
          </button>
          <button aria-label="全屏" className="flex">
            <svg {...icon}><path d="M.5 5V.5H5M1 1l5 5M13.500 9v4.500H9M13 13L8 8" /></svg>
          </button>
        </div>
      </div>
    </section>
  );
}

export default function App() {
  return (
    <div className="flex min-h-screen flex-col overflow-hidden bg-black font-['Liberation_Sans','Noto_Sans_CJK_SC',sans-serif]">
      <TopBar />
      <Toolbars />
      <div className="relative flex flex-1 border-t border-[#999]">
        <Toolbox />
        <Scene />
        <Tray />
        <Watermark />
        <span className="absolute top-[230px] -right-2.5 size-5 rounded-full border border-[#2c8a45] bg-[#3fb75c] pl-0.5 text-[7px] leading-[18px] font-bold text-white">50</span>
      </div>
      <StatusBar />
      <Taskbar />
      <div className="h-[25px]" />
      <Player />
    </div>
  );
}
